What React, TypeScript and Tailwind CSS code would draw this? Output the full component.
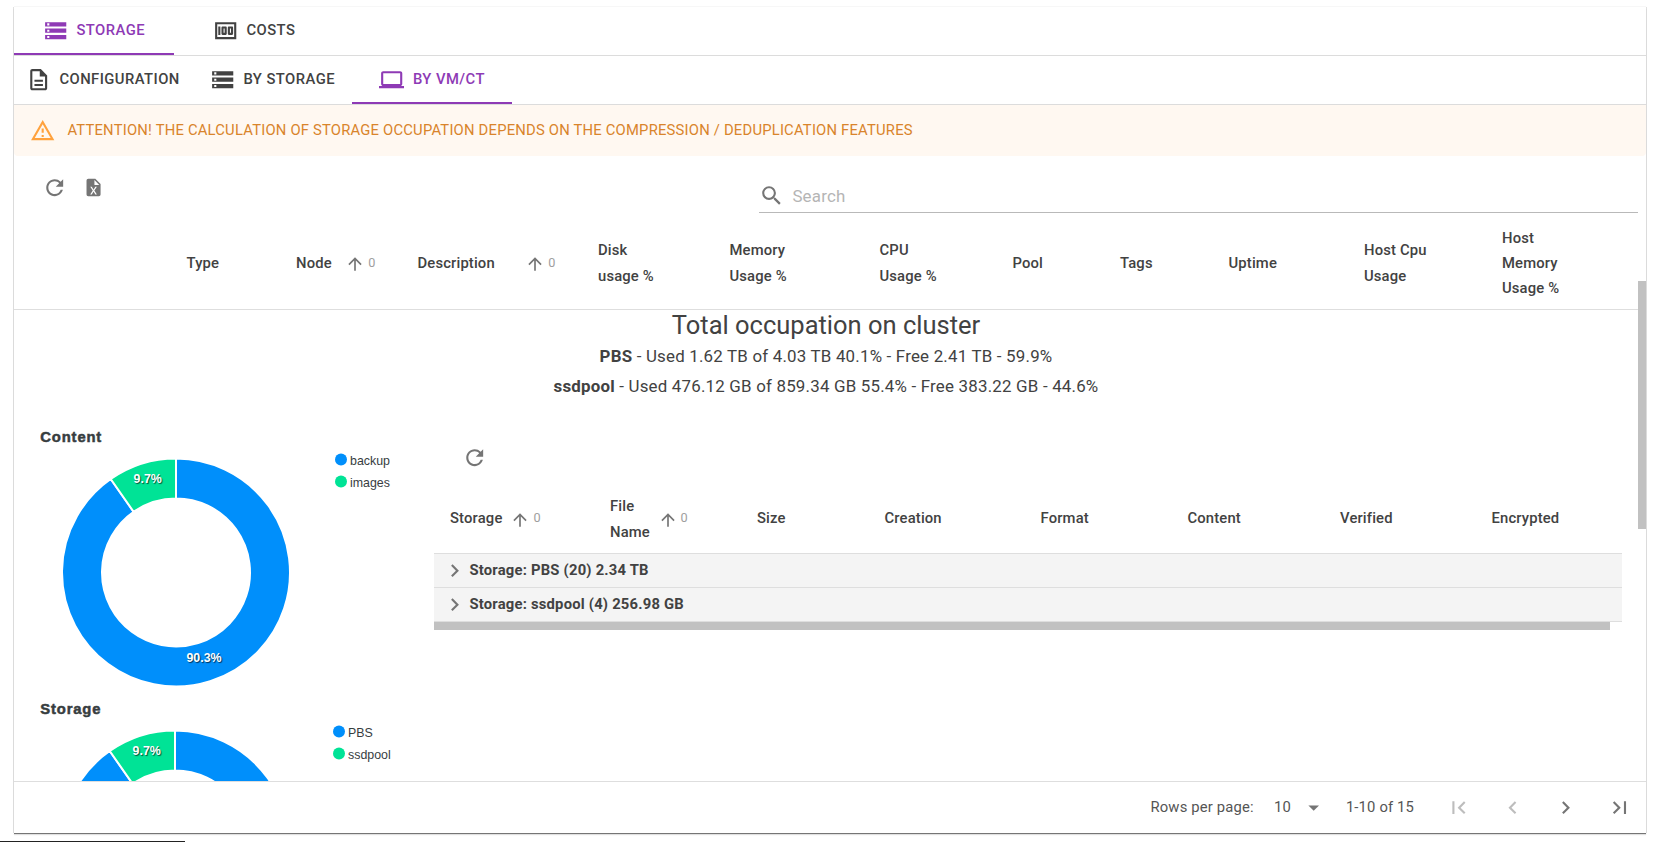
import React from "react";
import {
  MdStorage,
  MdRefresh,
  MdSearch,
  MdArrowUpward,
  MdChevronRight,
  MdChevronLeft,
  MdFirstPage,
  MdLastPage,
  MdArrowDropDown,
  MdOutlineMoney,
  MdOutlineReportProblem,
  MdOutlineDescription,
} from "react-icons/md";

function LaptopIcon() {
  return (
    <svg viewBox="0 0 24 24" className="size-[25.4px]" fill="currentColor">
      <path d="M20 18c1.1 0 1.99-.9 1.99-2L22 6c0-1.1-.9-2-2-2H4c-1.1 0-2 .9-2 2v10c0 1.1.9 2 2 2H0v2h24v-2h-4zM4 6h16v10H4V6z" />
    </svg>
  );
}

function ExcelIcon() {
  return (
    <svg viewBox="0 0 24 24" className="size-[21.1px]" fill="currentColor">
      <path d="M14,2H6A2,2 0 0,0 4,4V20A2,2 0 0,0 6,22H18A2,2 0 0,0 20,20V8L14,2M15.8,20H14L12,16.6L10,20H8.2L11.1,15.5L8.2,11H10L12,14.4L14,11H15.8L12.9,15.5L15.8,20M13,9V3.5L18.5,9H13Z" />
    </svg>
  );
}

type TabProps = {
  icon: React.ReactNode;
  label: string;
  active?: boolean;
  className: string;
};

function Tab({ icon, label, active, className }: TabProps) {
  return (
    <button
      className={`flex h-full shrink-0 items-center font-medium uppercase ${
        active ? "border-b-2 border-[#8e3ab5] pt-[2px] text-[#8e3ab5]" : "text-[#424242]"
      } ${className}`}
    >
      <span className="flex text-[25.4px]">{icon}</span>
      <span className="-mt-[2px] tracking-[0.45px]">{label}</span>
    </button>
  );
}

function SortMark({ className }: { className: string }) {
  return (
    <span className={`flex items-center text-[#757575] ${className}`}>
      <MdArrowUpward className="mt-px text-[20px]" />
      <span className="-mt-[2px] ml-[3px] text-[12.7px] font-normal text-[#9e9e9e]">0</span>
    </span>
  );
}

type Column = { label: string; width: string; sort?: string; lines?: string };

function HeaderCell({ label, width, sort, lines }: Column) {
  return (
    <div className={`flex shrink-0 items-center ${width}`}>
      <span className={`leading-[25.3px] ${lines ?? "whitespace-nowrap"}`}>{label}</span>
      {sort && <SortMark className={sort} />}
    </div>
  );
}

const columns: Column[] = [
  { label: "Type", width: "w-[109.5px]" },
  { label: "Node", width: "w-[121.5px]", sort: "ml-[13.5px]" },
  { label: "Description", width: "w-[180.5px]", sort: "ml-[30.5px]" },
  { label: "Disk usage %", width: "w-[131.5px]", lines: "w-[64px]" },
  { label: "Memory Usage %", width: "w-[150px]", lines: "w-[64px]" },
  { label: "CPU Usage %", width: "w-[133px]", lines: "w-[64px]" },
  { label: "Pool", width: "w-[107.5px]" },
  { label: "Tags", width: "w-[108.5px]" },
  { label: "Uptime", width: "w-[135.5px]" },
  { label: "Host Cpu Usage", width: "w-[138px]", lines: "w-[70px]" },
  { label: "Host Memory Usage %", width: "w-[100px]", lines: "w-[64px]" },
];

const fileColumns: Column[] = [
  { label: "Storage", width: "w-[160px]", sort: "ml-[8px]" },
  { label: "File Name", width: "w-[147px]", sort: "ml-[5.5px]", lines: "w-[42px] pt-px" },
  { label: "Size", width: "w-[127.5px]" },
  { label: "Creation", width: "w-[156px]" },
  { label: "Format", width: "w-[147px]" },
  { label: "Content", width: "w-[152.5px]" },
  { label: "Verified", width: "w-[151.5px]" },
  { label: "Encrypted", width: "w-[90px]" },
];

const groups = ["Storage: PBS (20) 2.34 TB", "Storage: ssdpool (4) 256.98 GB"];

const OUTER = 114;
const INNER = 74;

function arc(cx: number, cy: number, from: number, to: number) {
  const point = (r: number, turn: number) => {
    const a = turn * 2 * Math.PI;
    return `${cx + r * Math.sin(a)} ${cy - r * Math.cos(a)}`;
  };
  const large = to - from > 0.5 ? 1 : 0;
  return `M${point(OUTER, from)}A${OUTER} ${OUTER} 0 ${large} 1 ${point(OUTER, to)}L${point(INNER, to)}A${INNER} ${INNER} 0 ${large} 0 ${point(INNER, from)}Z`;
}

type DonutProps = { title: string; legend: [string, string]; cx: number; legendX: number };

function Donut({ title, legend, cx, legendX }: DonutProps) {
  const cy = 145.5;
  return (
    <svg
      width="400"
      height="272"
      className="block shrink-0 font-['Liberation_Sans',sans-serif]"
    >
      <text
        x="26.3"
        y="14.5"
        className="fill-[#373d3f] stroke-[#373d3f] text-[14.8px] font-bold tracking-[0.85px]"
        strokeWidth="0.5"
      >
        {title}
      </text>
      <g stroke="#fff" strokeWidth="2">
        <path d={arc(cx, cy, 0, 0.903)} fill="#008ffb" />
        <path d={arc(cx, cy, 0.903, 1)} fill="#00e396" />
      </g>
      <g
        className="fill-white text-[12.4px] font-bold [text-shadow:1px_1px_1px_rgba(0,0,0,0.65)]"
        textAnchor="middle"
      >
        <text x={cx - 28.3} y={cy - 90}>9.7%</text>
        <text x={cx + 28} y={cy + 89}>90.3%</text>
      </g>
      {legend.map((name, i) => (
        <g key={name}>
          <circle cx={legendX} cy={32.5 + i * 22} r="6" fill={i ? "#00e396" : "#008ffb"} />
          <text x={legendX + 9} y={38 + i * 22} className="fill-[#373d3f] text-[12.4px]">
            {name}
          </text>
        </g>
      ))}
    </svg>
  );
}

export default function App() {
  return (
    <div className="relative h-[842px] w-[1658px] overflow-hidden bg-white pt-[7px] pl-[14px] font-['Roboto',sans-serif] text-[14.8px] text-[#424242]">
      <div className="flex h-[826px] w-[1632px] flex-col bg-white shadow-[0_1px_0_#757575,0_2px_1px_rgba(0,0,0,0.12),-1px_0_0_#e0e0e0,1px_0_0_#e0e0e0,0_-1px_0_#f7f7f7]">
        <nav className="flex h-[49px] shrink-0 border-b border-[#dcdcdc]">
          <Tab active icon={<MdStorage />} label="Storage" className="w-[160px] gap-[8px] pl-[29px]" />
          <Tab icon={<MdOutlineMoney />} label="Costs" className="w-[160px] gap-[8px] pl-[39px]" />
        </nav>
        <nav className="flex h-[49px] shrink-0 border-b border-[#dcdcdc]">
          <Tab icon={<MdOutlineDescription />} label="Configuration" className="w-[182px] gap-[8px] pl-[12px]" />
          <Tab icon={<MdStorage />} label="By storage" className="w-[156px] gap-[8px] pl-[14px]" />
          <Tab active icon={<LaptopIcon />} label="By VM/CT" className="w-[160px] gap-[8.5px] pl-[27px]" />
        </nav>

        <div className="flex h-[51px] shrink-0 items-center rounded-b bg-[#fff8f1] pl-[16px] text-[#d9842b]">
          <MdOutlineReportProblem className="text-[25.4px] text-[#ffa23e]" />
          <span className="-mt-px ml-[12px] tracking-[0.2px] uppercase">
            Attention! The calculation of storage occupation depends on the compression / deduplication features
          </span>
        </div>

        <div className="flex h-[67px] shrink-0">
          <div className="flex w-[745px] items-start pt-[19px] pl-[28px] text-[#757575]">
            <MdRefresh className="text-[25.4px]" />
            <div className="mt-[2px] ml-[16px]">
              <ExcelIcon />
            </div>
          </div>
          <div className="flex h-[57px] w-[879px] items-center border-b border-[#b9b9b9] pt-[23px]">
            <MdSearch className="text-[25.4px] text-[#757575]" />
            <span className="mt-[2px] ml-[8px] text-[16.9px] tracking-[0.2px] text-[#b5b5b5]">Search</span>
          </div>
        </div>

        <div className="flex h-[87px] w-[1624px] shrink-0 border-b border-[#dedede] pb-[5px] pl-[172.5px] font-medium tracking-[0.01071em]">
          {columns.map((c) => (
            <HeaderCell key={c.label} {...c} />
          ))}
        </div>

        <div className="flex min-h-0 grow overflow-hidden">
          <div className="flex w-[1624px] flex-col">
            <div className="flex h-[117px] shrink-0 flex-col items-center text-[16.9px] tracking-[0.2px]">
              <h5 className="h-[31px] text-[25.5px] leading-[31px] tracking-normal">Total occupation on cluster</h5>
              <p className="h-[30px] leading-[30px]">
                <b>PBS</b> - Used 1.62 TB of 4.03 TB 40.1% - Free 2.41 TB - 59.9%
              </p>
              <p className="h-[30px] leading-[30px]">
                <b>ssdpool</b> - Used 476.12 GB of 859.34 GB 55.4% - Free 383.22 GB - 44.6%
              </p>
            </div>
            <div className="flex">
              <div className="flex h-[354px] w-[420px] shrink-0 flex-col overflow-hidden">
                <Donut title="Content" legend={["backup", "images"]} cx={162} legendX={327} />
                <Donut title="Storage" legend={["PBS", "ssdpool"]} cx={161} legendX={325} />
              </div>
              <div className="flex w-[1188px] flex-col">
                <div className="h-[58px] pt-[17.5px] pl-[28px] text-[#757575]">
                  <MdRefresh className="text-[25.4px]" />
                </div>
                <div className="flex h-[68px] pl-[16px] font-medium tracking-[0.01071em]">
                  {fileColumns.map((c) => (
                    <HeaderCell key={c.label} {...c} />
                  ))}
                </div>
                {groups.map((g) => (
                  <div
                    key={g}
                    className="flex h-[34px] items-center border-t border-[#dedede] bg-[#f4f4f4] pl-[8px] font-bold tracking-[0.21px]"
                  >
                    <MdChevronRight className="text-[25.4px] text-[#757575]" />
                    <span className="-mt-px ml-[2px]">{g}</span>
                  </div>
                ))}
                <div className="border-t border-[#dedede]">
                  <div className="h-2 w-[1176px] bg-[#c1c1c1]" />
                </div>
              </div>
            </div>
          </div>
          <div className="w-2 shrink-0 bg-white" />
        </div>

        <footer className="flex h-[52px] shrink-0 items-center border-t border-[#dedede] pl-[1136.5px] tracking-[0.01071em] text-[#555]">
          <span className="-mt-px w-[123.5px]">Rows per page:</span>
          <span className="w-[21.5px]">10</span>
          <MdArrowDropDown className="ml-[5px] text-[25.4px] text-[#757575]" />
          <span className="-mt-px ml-[20px] w-[100.5px]">1-10 of 15</span>
          <div className="flex gap-[28px] text-[25.4px] text-[#757575]">
            <MdFirstPage className="text-[#bdbdbd]" />
            <MdChevronLeft className="text-[#bdbdbd]" />
            <MdChevronRight />
            <MdLastPage />
          </div>
        </footer>
      </div>
      <div className="absolute top-[281px] left-[1638px] h-[248px] w-2 bg-[#c1c1c1]" />
      <div className="absolute top-[841px] left-0 h-px w-[185px] bg-[#222]" />
    </div>
  );
}
